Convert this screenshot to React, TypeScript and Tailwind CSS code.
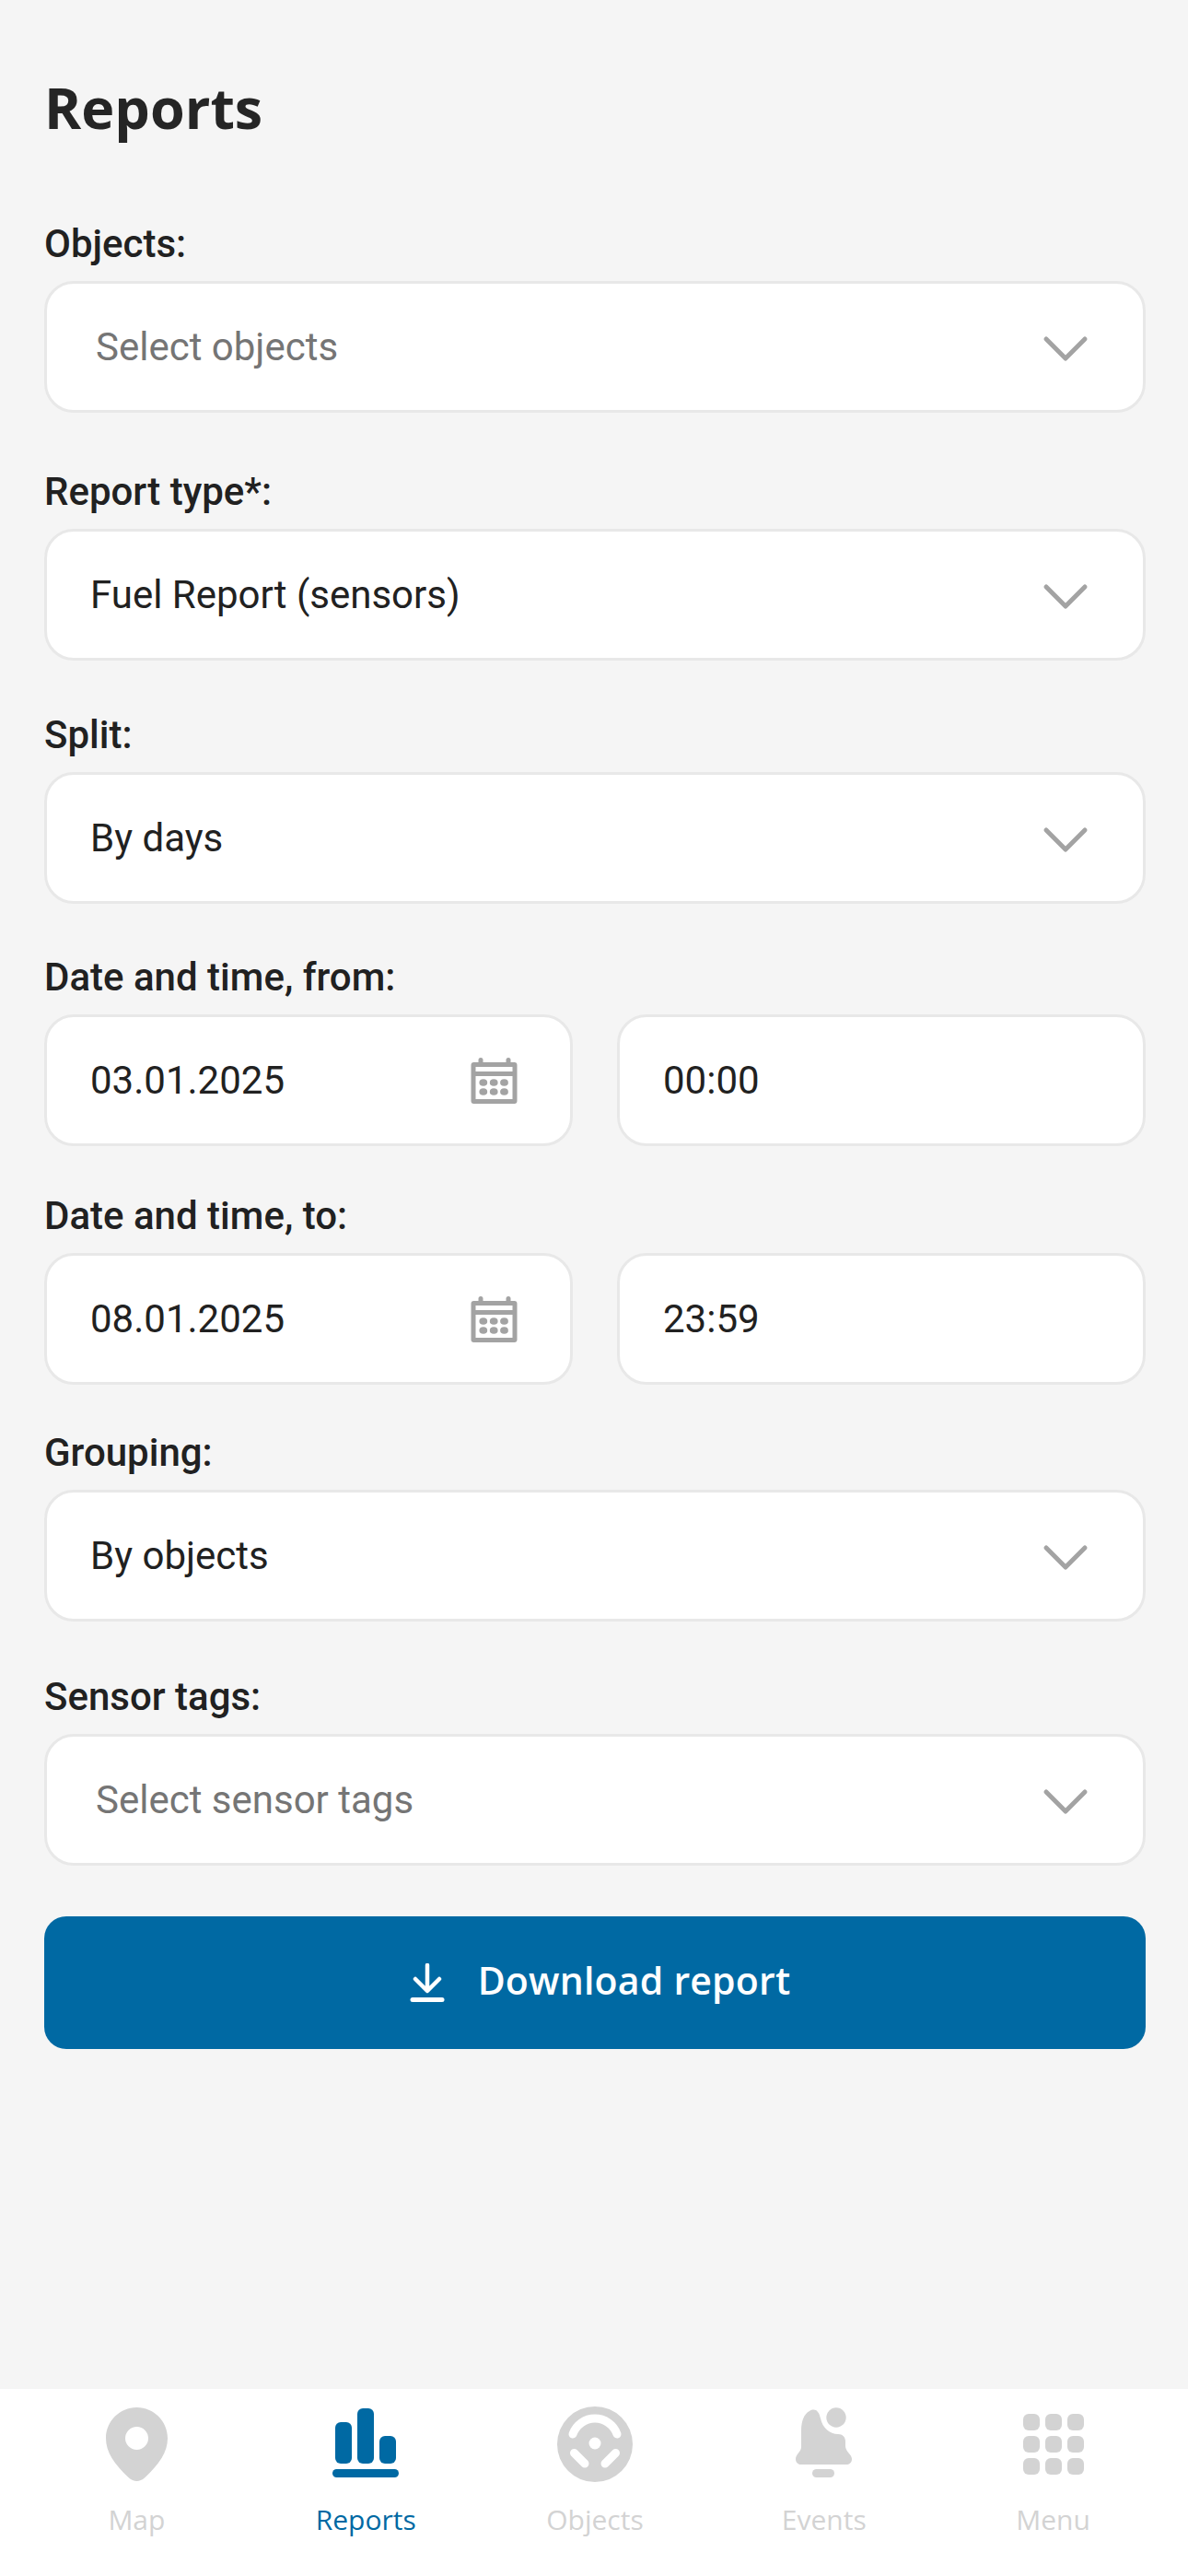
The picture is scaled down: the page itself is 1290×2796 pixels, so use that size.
const ROBOTO = "font-['Roboto','Liberation_Sans',sans-serif]";
const ROUND = "font-['Open_Sans','Lato',sans-serif]";

function Label({ text, className }: { text: string; className: string }) {
  return <div className={`${ROBOTO} text-[42px] leading-[48px] font-medium text-[#212121] ${className}`}>{text}</div>;
}

function Chevron() {
  return (
    <svg viewBox="0 0 50 30" className="w-[50px] h-[30px] mt-[5px] text-[#a3a3a3]" fill="none" stroke="currentColor" strokeWidth="5" strokeLinecap="round" strokeLinejoin="round">
      <path d="M4 4l21 21 21-21" />
    </svg>
  );
}

function Select({ value, placeholder }: { value: string; placeholder?: boolean }) {
  return (
    <div className="h-[143px] rounded-[32px] border-[3px] border-[#e8e8e8] bg-white flex items-center justify-between pr-[59px]">
      <span className={`${ROBOTO} text-[42px] ${placeholder ? "pl-[53px] text-[#757575]" : "pl-[47px] text-[#212121]"}`}>{value}</span>
      <Chevron />
    </div>
  );
}

function CalendarIcon() {
  return (
    <svg viewBox="0 0 50 50" className="w-[51px] h-[50px] text-[#a3a3a3]" fill="currentColor">
      <rect x="8" y="0" width="5" height="9" rx="2.5" />
      <rect x="38" y="0" width="5" height="9" rx="2.5" />
      <path fillRule="evenodd" d="M3 5h44a3 3 0 0 1 3 3v39a3 3 0 0 1-3 3H3a3 3 0 0 1-3-3V8a3 3 0 0 1 3-3Zm2 5v5h40v-5H5Zm0 10v25h40V20H5Z" />
      {[13.3, 24.7, 36].map((x) => (
        <g key={x}>
          <ellipse cx={x} cy="27" rx="4.4" ry="3.8" />
          <ellipse cx={x} cy="37" rx="4.4" ry="3.8" />
        </g>
      ))}
    </svg>
  );
}

function DateRow({ date, time }: { date: string; time: string }) {
  return (
    <div className="grid grid-cols-2 gap-[48px]">
      <div className="h-[143px] rounded-[32px] border-[3px] border-[#e8e8e8] bg-white flex items-center justify-between pr-[57px]">
        <span className={`${ROBOTO} text-[42px] pl-[47px] text-[#212121]`}>{date}</span>
        <CalendarIcon />
      </div>
      <div className="h-[143px] rounded-[32px] border-[3px] border-[#e8e8e8] bg-white flex items-center">
        <span className={`${ROBOTO} text-[42px] pl-[47px] text-[#212121]`}>{time}</span>
      </div>
    </div>
  );
}

function MapIcon() {
  return (
    <svg viewBox="0 0 67 80" className="w-[67px] h-[80px]" fill="#d3d3d3">
      <path fillRule="evenodd" d="M33.5 0C15 0 0 15 0 33.500c0 15 9 28 25 43 5 4.500 12 4.500 17 0 16-15 25-28 25-43C67 15 52 0 33.500 0Zm0 21a12.500 12.500 0 1 1 0 25 12.500 12.500 0 0 1 0-25Z" />
    </svg>
  );
}

function ReportsIcon() {
  return (
    <svg viewBox="0 0 72 80" className="w-[72px] h-[80px]" fill="#0069a3">
      <rect x="3" y="16" width="18" height="45" rx="6" />
      <rect x="27" y="1" width="18" height="60" rx="6" />
      <rect x="51" y="31" width="18" height="30" rx="6" />
      <rect x="0" y="67" width="72" height="9" rx="4.500" />
    </svg>
  );
}

function WheelIcon() {
  return (
    <svg viewBox="0 0 82 82" className="w-[82px] h-[82px]">
      <circle cx="41" cy="41" r="41" fill="#d3d3d3" />
      <circle cx="41" cy="40" r="6.500" fill="white" />
      <g fill="none" stroke="white" strokeWidth="9" strokeLinecap="round">
        <path d="M17 30a25.500 25.500 0 0 1 48 0" />
        <path d="M18.500 50.500L30 62" />
        <path d="M52 62l11.500-11.500" />
      </g>
    </svg>
  );
}

function BellIcon() {
  return (
    <svg viewBox="0 0 62 80" className="w-[62px] h-[80px]" fill="#d3d3d3">
      <circle cx="44" cy="11" r="10.700" />
      <path d="M24 5c-2-3-6-3-9-1C9 7 6 15 6 25v18c0 5-6 8-6 13 0 4 3 6 6 6h49c3 0 6-2 6-6 0-5-7-8-7-14v-5c0-5-3-8-8-8-9 0-17-7-19-17-1-3-1-5-3-7Z" />
      <rect x="18" y="67" width="24" height="9" rx="4.500" />
    </svg>
  );
}

function GridIcon() {
  return (
    <svg viewBox="0 0 66 66" className="w-[66px] h-[66px]" fill="#d3d3d3">
      {[0, 24, 48].map((y) =>
        [0, 24, 48].map((x) => <rect key={`${x}-${y}`} x={x} y={y} width="18" height="18" rx="6" />)
      )}
    </svg>
  );
}

const tabs = [
  { label: "Map", icon: <MapIcon /> },
  { label: "Reports", icon: <ReportsIcon />, active: true },
  { label: "Objects", icon: <WheelIcon /> },
  { label: "Events", icon: <BellIcon /> },
  { label: "Menu", icon: <GridIcon /> },
];

export default function App() {
  return (
    <div className="w-[1290px] h-[2796px] bg-[#f5f5f5] flex flex-col">
      <div className="flex-1 pl-[48px] pr-[46px] pt-[75px]">
        <h1 className={`${ROUND} text-[61px] leading-[84px] font-bold text-[#252525]`}>Reports</h1>

        <Label text="Objects:" className="mt-[82px] mb-[16px]" />
        <Select value="Select objects" placeholder />

        <Label text="Report type*:" className="mt-[62px] mb-[16px]" />
        <Select value="Fuel Report (sensors)" />

        <Label text="Split:" className="mt-[57px] mb-[16px]" />
        <Select value="By days" />

        <Label text="Date and time, from:" className="mt-[56px] mb-[16px]" />
        <DateRow date="03.01.2025" time="00:00" />

        <Label text="Date and time, to:" className="mt-[52px] mb-[16px]" />
        <DateRow date="08.01.2025" time="23:59" />

        <Label text="Grouping:" className="mt-[50px] mb-[16px]" />
        <Select value="By objects" />

        <Label text="Sensor tags:" className="mt-[58px] mb-[16px]" />
        <Select value="Select sensor tags" placeholder />

        <button className="mt-[55px] w-full h-[144px] rounded-[24px] bg-[#0069a3] flex items-center justify-center gap-[36px] pl-[11px]">
          <svg viewBox="0 0 38 42" className="w-[38px] h-[42px]" fill="none" stroke="white" strokeWidth="4.500" strokeLinecap="round" strokeLinejoin="round">
            <path d="M19 2v27M6 17l13 13 13-13" />
            <path d="M3 39.500h32" strokeWidth="5" />
          </svg>
          <span className={`${ROUND} text-[41px] mb-[4px] tracking-[0.2px] font-semibold text-white`}>Download report</span>
        </button>
      </div>

      <nav className="h-[203px] bg-white grid grid-cols-5 pl-[24px] pr-[22px] pt-[19px]">
        {tabs.map((tab) => (
          <div key={tab.label} className="flex flex-col items-center">
            <div className="h-[82px] flex items-center justify-center">{tab.icon}</div>
            <span className={`${ROUND} mt-[18px] text-[30px] font-medium ${tab.active ? "text-[#0069a3]" : "text-[#d3d3d3]"}`}>{tab.label}</span>
          </div>
        ))}
      </nav>
    </div>
  );
}
